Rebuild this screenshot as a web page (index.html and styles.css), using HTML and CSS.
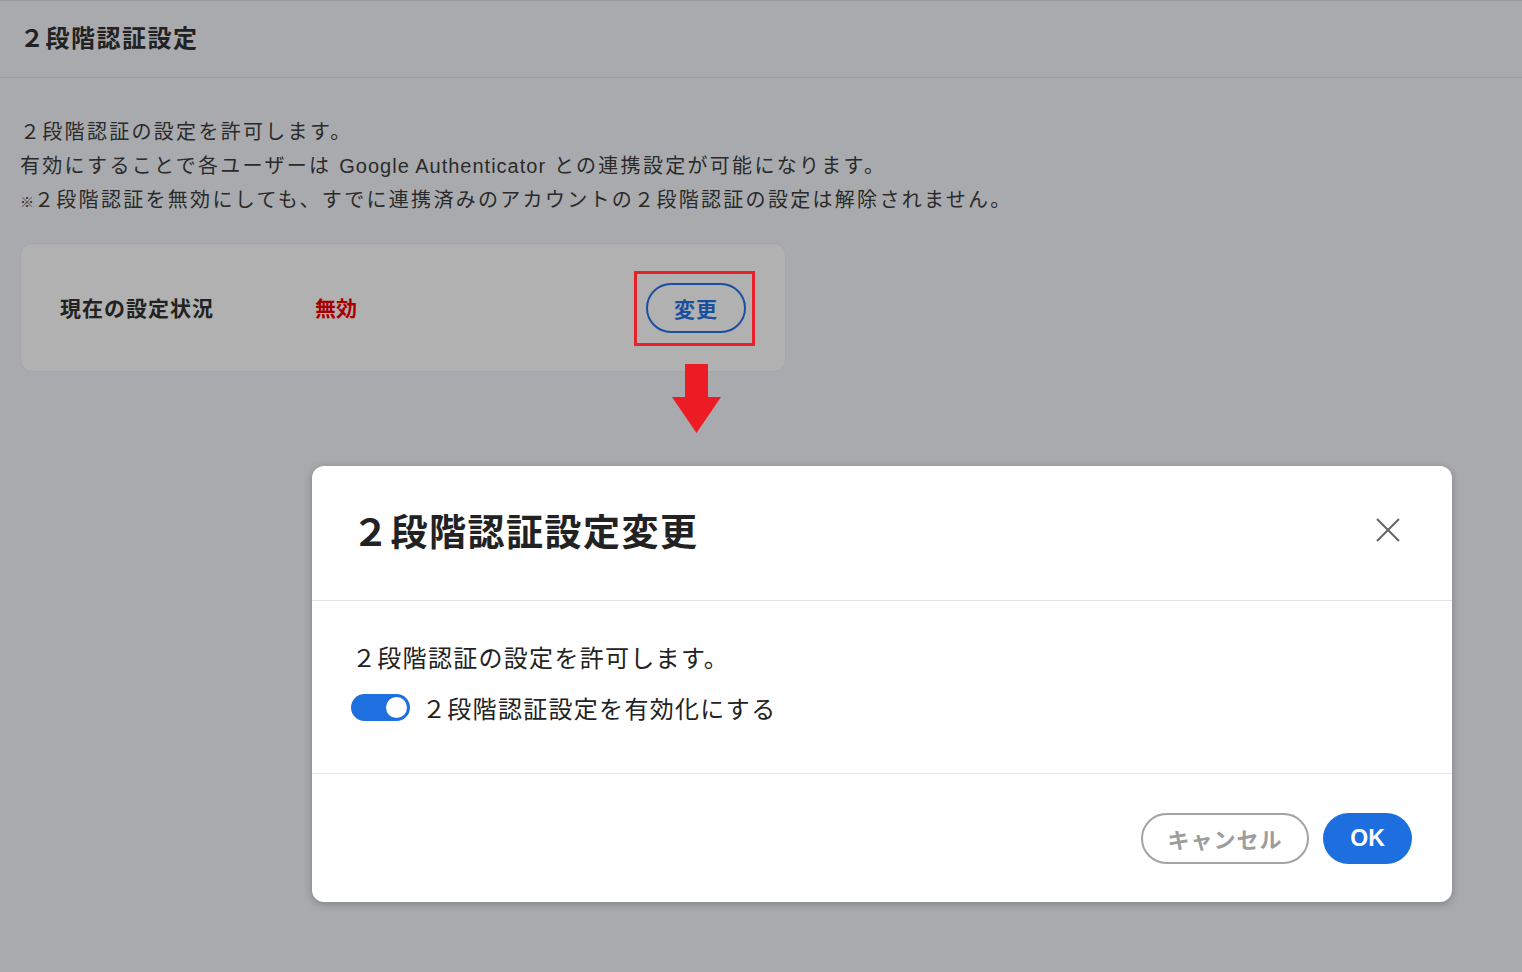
FILE: index.html
```html
<!DOCTYPE html>
<html lang="ja">
<head>
    <meta charset="UTF-8">
    <title>2段階認証設定</title>
    <link rel="stylesheet" href="styles.css">
</head>
<body>
    <div class="page">
        <div class="page-header">
            <h1>２段階認証設定</h1>
        </div>
        <div class="page-body">
            <p class="desc">
                ２段階認証の設定を許可します。<br>
                有効にすることで各ユーザーは <span class="en">Google Authenticator</span> との連携設定が可能になります。<br>
                <span class="note">※</span>２段階認証を無効にしても、すでに連携済みのアカウントの２段階認証の設定は解除されません。
            </p>
            <div class="status-card">
                <span class="status-label">現在の設定状況</span>
                <span class="status-value">無効</span>
                <div class="highlight">
                    <button class="change-button">変更</button>
                    <div class="arrow">
                        <svg width="50" height="70" viewBox="0 0 50 70">
                            <polygon points="13,0 36,0 36,33 49,33 24.5,69 0,33 13,33" fill="#ed1c24"/>
                        </svg>
                    </div>
                </div>
            </div>
        </div>
    </div>

    <div class="modal">
        <div class="modal-header">
            <h2>２段階認証設定変更</h2>
            <span class="close">
                <svg width="26" height="26" viewBox="0 0 26 26">
                    <path d="M2 2 L24 24 M24 2 L2 24" stroke="#666" stroke-width="2" fill="none"/>
                </svg>
            </span>
        </div>
        <div class="modal-body">
            <p>２段階認証の設定を許可します。</p>
            <label class="toggle-row">
                <span class="toggle"><span class="knob"></span></span>
                ２段階認証設定を有効化にする
            </label>
        </div>
        <div class="modal-footer">
            <button class="cancel-button">キャンセル</button>
            <button class="ok-button">OK</button>
        </div>
    </div>
</body>
</html>
```

FILE: styles.css
```css
body {
    margin: 0;
    padding: 0;
    background-color: #a9aaae;
    font-family: "Liberation Sans", "Noto Sans CJK JP", sans-serif;
    color: #222;
    height: 972px;
    overflow: hidden;
    position: relative;
}

.page {
    border-top: 1px solid #96979b;
}

.page-header {
    height: 77px;
    border-bottom: 1px solid #9d9ea2;
    display: flex;
    align-items: center;
    padding: 0 0 5px 20px;
    box-sizing: border-box;
}

.page-header h1 {
    margin: 0;
    font-size: 24px;
    font-weight: bold;
    letter-spacing: 1.5px;
    color: #222;
}

.page-body {
    padding: 0 20px;
}

.desc {
    margin: 37px 0 24px;
    font-size: 20px;
    line-height: 34px;
    letter-spacing: 2.3px;
    color: #2a2a2a;
}

.desc .en {
    letter-spacing: 1px;
}

.note {
    font-size: 14px;
    letter-spacing: 0;
}

.status-card {
    width: 766px;
    height: 129px;
    background-color: #b1b1b1;
    border: 1px solid #a6a6a6;
    border-radius: 12px;
    display: flex;
    align-items: center;
    box-sizing: border-box;
    padding: 0 0 1px 39px;
}

.status-label {
    font-size: 21px;
    font-weight: bold;
    letter-spacing: 1px;
    color: #222;
    width: 255px;
}

.status-value {
    font-size: 21px;
    font-weight: bold;
    color: #a80000;
    flex: 1;
}

.highlight {
    position: relative;
    border: 3px solid #e8202a;
    padding: 9px 6px 10px 9px;
    margin: 2px 30px 0 0;
}

.change-button {
    display: block;
    width: 100px;
    height: 50px;
    border: 2px solid #1a4f9f;
    border-radius: 25px;
    background: transparent;
    color: #1a4f9f;
    font-family: inherit;
    font-size: 21px;
    font-weight: bold;
    letter-spacing: 1px;
    cursor: pointer;
}

.arrow {
    position: absolute;
    left: 35px;
    top: 90px;
}

.modal {
    position: absolute;
    left: 312px;
    top: 466px;
    width: 1140px;
    height: 436px;
    background-color: #fff;
    border-radius: 12px;
    box-shadow: 0 2px 8px rgba(0, 0, 0, 0.25);
    display: flex;
    flex-direction: column;
}

.modal-header {
    height: 135px;
    border-bottom: 1px solid #e3e3e3;
    display: flex;
    align-items: center;
    justify-content: space-between;
    padding: 0 51px 6px 40px;
    box-sizing: border-box;
}

.modal-header h2 {
    margin: 0;
    font-size: 37px;
    font-weight: bold;
    letter-spacing: 1.5px;
    color: #222;
}

.close {
    display: flex;
    cursor: pointer;
}

.modal-body {
    height: 173px;
    border-bottom: 1px solid #e8e8e8;
    padding: 40px 40px 0;
    box-sizing: border-box;
}

.modal-body p {
    margin: 0;
    font-size: 24px;
    line-height: 36px;
    letter-spacing: 1.3px;
    color: #222;
}

.toggle-row {
    display: flex;
    align-items: center;
    gap: 12px;
    margin-top: 13px;
    margin-left: -1px;
    font-size: 24px;
    letter-spacing: 1.3px;
    color: #222;
}

.toggle {
    width: 59px;
    height: 27px;
    border-radius: 14px;
    background-color: #1e6fe0;
    display: flex;
    align-items: center;
    justify-content: flex-end;
    padding-right: 3px;
    box-sizing: border-box;
}

.knob {
    width: 21px;
    height: 21px;
    border-radius: 50%;
    background-color: #fff;
}

.modal-footer {
    flex: 1;
    display: flex;
    align-items: center;
    justify-content: flex-end;
    gap: 14px;
    padding-right: 40px;
}

.cancel-button {
    width: 168px;
    height: 51px;
    border: 2px solid #a3a3a3;
    border-radius: 26px;
    background: #fff;
    color: #9d9d9d;
    font-family: inherit;
    font-size: 22px;
    font-weight: bold;
    letter-spacing: 1px;
    cursor: pointer;
}

.ok-button {
    width: 89px;
    height: 51px;
    border: none;
    border-radius: 26px;
    background-color: #1d6fe0;
    color: #fff;
    font-family: inherit;
    font-size: 23px;
    font-weight: bold;
    cursor: pointer;
}
```
